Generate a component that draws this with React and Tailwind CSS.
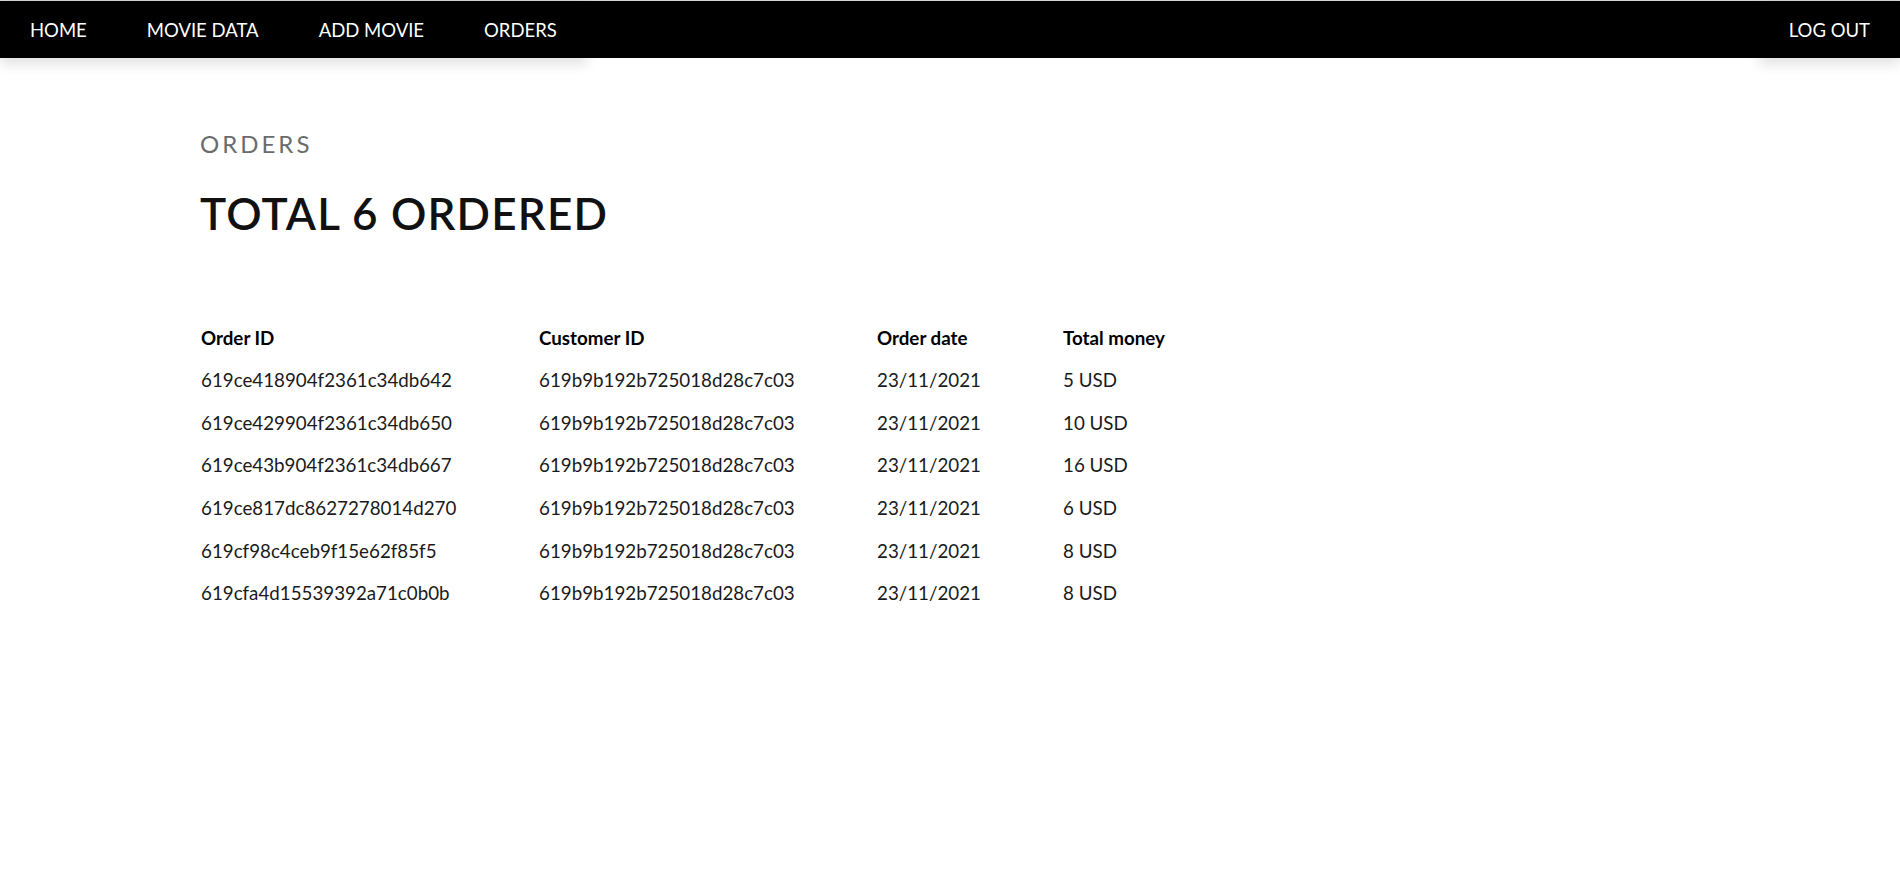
import React from 'react'

const orders = [
  { id: '619ce418904f2361c34db642', customer: '619b9b192b725018d28c7c03', date: '23/11/2021', total: '5 USD' },
  { id: '619ce429904f2361c34db650', customer: '619b9b192b725018d28c7c03', date: '23/11/2021', total: '10 USD' },
  { id: '619ce43b904f2361c34db667', customer: '619b9b192b725018d28c7c03', date: '23/11/2021', total: '16 USD' },
  { id: '619ce817dc8627278014d270', customer: '619b9b192b725018d28c7c03', date: '23/11/2021', total: '6 USD' },
  { id: '619cf98c4ceb9f15e62f85f5', customer: '619b9b192b725018d28c7c03', date: '23/11/2021', total: '8 USD' },
  { id: '619cfa4d15539392a71c0b0b', customer: '619b9b192b725018d28c7c03', date: '23/11/2021', total: '8 USD' },
]

const navLinks = ['HOME', 'MOVIE DATA', 'ADD MOVIE', 'ORDERS']

export default function App() {
  return (
    <div className="min-h-screen bg-white font-['Lato',sans-serif]">
      <nav className="flex justify-between bg-black border-t border-[#d4d4d4] h-[58px]">
        <ul className="flex shadow-[0_6px_12px_rgba(0,0,0,0.12)]">
          {navLinks.map(link => (
            <li key={link} className="px-[30px] pt-px text-[18.5px] leading-[57px] text-white">{link}</li>
          ))}
        </ul>
        <ul className="flex shadow-[0_6px_12px_rgba(0,0,0,0.12)]">
          <li className="px-[30px] pt-px text-[18.5px] leading-[57px] text-white">LOG OUT</li>
        </ul>
      </nav>

      <main className="pl-[200px]">
        <h2 className="mt-[72px] text-[24px] leading-[1.2] tracking-[3px] text-[#6b6b6b]">ORDERS</h2>
        <h1 className="mt-[28px] text-[44px] leading-[1.2] font-semibold tracking-[1.2px] text-[#111]">TOTAL 6 ORDERED</h1>

        <div className="mt-[77px] pl-px text-[18.75px] leading-[42.6px]">
          <div className="grid grid-cols-[338px_338px_186px_auto] font-bold text-black">
            <div>Order ID</div>
            <div>Customer ID</div>
            <div>Order date</div>
            <div>Total money</div>
          </div>
          {orders.map(o => (
            <div key={o.id} className="grid grid-cols-[338px_338px_186px_auto] text-[#1a1a1a]">
              <div>{o.id}</div>
              <div>{o.customer}</div>
              <div>{o.date}</div>
              <div>{o.total}</div>
            </div>
          ))}
        </div>
      </main>
    </div>
  )
}
